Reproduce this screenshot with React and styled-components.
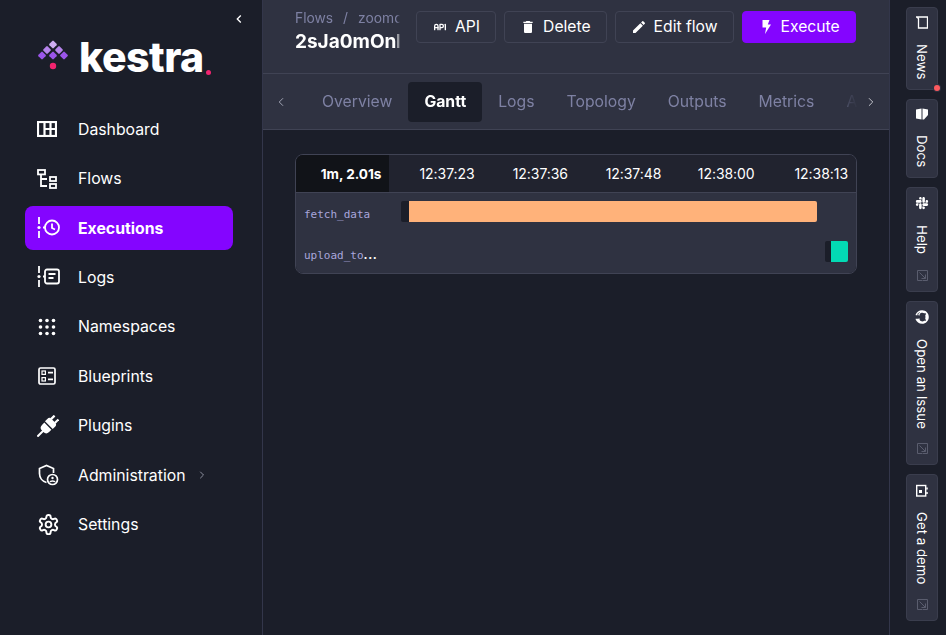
import React from "react";
import styled, { createGlobalStyle } from "styled-components";
import { FaSlack, FaGithub } from "react-icons/fa";
import { MdDelete, MdEdit, MdChevronLeft } from "react-icons/md";
import { TbApi } from "react-icons/tb";
import { ChevronLeft, ChevronRight } from "lucide-react";

const GlobalStyle = createGlobalStyle`
  html, body, #root {
    margin: 0;
    height: 100%;
  }

  body {
    background: #1b1e29;
    color: #fff;
    font-family: "Inter", "Liberation Sans", sans-serif;
    overflow: hidden;
  }

  * {
    box-sizing: border-box;
  }
`;

function LogoMark() {
  const dia = [
    [15, 4.5, "#cfaef2"],
    [9, 10, "#b684ec"],
    [21, 10, "#b684ec"],
    [4, 15.5, "#9b55ea"],
    [15, 15.5, "#9b55ea"],
    [26, 15.5, "#9b55ea"],
  ];
  return (
    <svg width="30" height="30" viewBox="0 0 30 30">
      {dia.map(([x, y, c]) => (
        <rect
          key={x + "-" + y}
          x={x - 3}
          y={y - 3}
          width="6"
          height="6"
          rx="1"
          fill={c}
          transform={`rotate(45 ${x} ${y})`}
        />
      ))}
      <circle cx="15" cy="26" r="3.2" fill="#f1246f" />
    </svg>
  );
}

function DashboardIcon() {
  return (
    <svg width="20" height="16" viewBox="0 0 20 16" fill="none" stroke="#fff" strokeWidth="2.2">
      <rect x="1" y="1" width="18" height="14" />
      <path d="M7.500 1v14M13.500 1v14M7.500 8h12" />
    </svg>
  );
}

function FlowsIcon() {
  return (
    <svg width="20" height="20" viewBox="0 0 20 20" fill="none" stroke="#fff" strokeWidth="1.8">
      <rect x="1" y="1" width="7" height="4.4" />
      <rect x="13" y="8" width="6" height="4" />
      <rect x="13" y="15" width="6" height="4" />
      <path d="M4 6v11h6M4 10h6" />
    </svg>
  );
}

function ExecutionsIcon() {
  return (
    <svg width="24" height="22" viewBox="0 0 24 22" fill="none" stroke="#fff" strokeWidth="1.8">
      <path d="M2 0v7M2 14v7" />
      <circle cx="2" cy="10.5" r="1.6" fill="#fff" stroke="none" />
      <path d="M6 10.5h2" />
      <circle cx="15" cy="10.5" r="7" />
      <path d="M15 6.5v4.5l3 1.5" />
    </svg>
  );
}

function LogsIcon() {
  return (
    <svg width="24" height="22" viewBox="0 0 24 22" fill="none" stroke="#fff" strokeWidth="1.8">
      <path d="M2 0v7M2 14v7" />
      <circle cx="2" cy="10.5" r="1.6" fill="#fff" stroke="none" />
      <path d="M6 10.5h2" />
      <rect x="8" y="3.5" width="14" height="14" rx="2" />
      <path d="M11.5 8h7M11.5 12h5" />
    </svg>
  );
}

function NamespacesIcon() {
  const dots = [];
  [1.5, 8, 14.5].forEach((y) =>
    [3.5, 10, 16.5].forEach((x) => dots.push([x, y + 1]))
  );
  return (
    <svg width="20" height="18" viewBox="0 0 20 18" fill="#fff">
      {dots.map(([x, y]) => (
        <circle key={x + "-" + y} cx={x} cy={y} r="1.8" />
      ))}
    </svg>
  );
}

function BlueprintsIcon() {
  return (
    <svg width="20" height="18" viewBox="0 0 20 18" fill="none" stroke="#fff" strokeWidth="1.7">
      <rect x="2" y="1" width="16" height="16" rx="1.5" />
      <rect x="5" y="4" width="3.4" height="3.4" strokeWidth="1.2" />
      <rect x="5" y="10.600" width="3.4" height="3.4" strokeWidth="1.2" />
      <path d="M11 5.700h5M11 12.300h5" />
    </svg>
  );
}

function PluginsIcon() {
  return (
    <svg width="22" height="22" viewBox="0 0 22 22" fill="#fff">
      <g transform="rotate(45 11 11)">
        <rect x="10" y="17" width="2" height="9" />
        <path d="M6 11.200h10v3.300a4 4 0 0 1-4 4h-2a4 4 0 0 1-4-4z" />
        <path d="M5.500 9.800V6.500a3 3 0 0 1 3-3h5a3 3 0 0 1 3 3v3.300z" />
        <rect x="7.200" y="-1" width="2.200" height="5" />
        <rect x="12.600" y="-1" width="2.200" height="5" />
      </g>
    </svg>
  );
}

function AdminIcon() {
  return (
    <svg width="22" height="22" viewBox="0 0 22 22" fill="none" stroke="#fff" strokeWidth="1.7">
      <path d="M9.500 18.500c-4-1-7-4.500-7-9V4.500l7-3 7 3V9" />
      <circle cx="15.500" cy="15.500" r="5" />
      <circle cx="15.500" cy="14" r="1.200" fill="#fff" stroke="none" />
      <path d="M13 18c.4-1.400 4.600-1.400 5 0" strokeWidth="1.4" />
    </svg>
  );
}

function SettingsIcon() {
  return (
    <svg width="23" height="23" viewBox="0 0 24 24" fill="none" stroke="#fff" strokeWidth="2" strokeLinejoin="round">
      <path d="M12.200 2h-.4a2 2 0 0 0-2 2v.2a2 2 0 0 1-1 1.700l-.4.300a2 2 0 0 1-2 0l-.2-.1a2 2 0 0 0-2.700.7l-.2.400a2 2 0 0 0 .7 2.700l.2.100a2 2 0 0 1 1 1.700v.5a2 2 0 0 1-1 1.800l-.2.100a2 2 0 0 0-.7 2.700l.2.400a2 2 0 0 0 2.700.7l.2-.1a2 2 0 0 1 2 0l.4.300a2 2 0 0 1 1 1.700v.2a2 2 0 0 0 2 2h.4a2 2 0 0 0 2-2v-.2a2 2 0 0 1 1-1.700l.4-.3a2 2 0 0 1 2 0l.2.100a2 2 0 0 0 2.700-.7l.2-.4a2 2 0 0 0-.7-2.700l-.2-.1a2 2 0 0 1-1-1.800v-.5a2 2 0 0 1 1-1.700l.2-.1a2 2 0 0 0 .7-2.700l-.2-.4a2 2 0 0 0-2.700-.7l-.2.100a2 2 0 0 1-2 0l-.4-.3a2 2 0 0 1-1-1.700V4a2 2 0 0 0-2-2z" />
      <circle cx="12" cy="12" r="3" />
    </svg>
  );
}

function BoltIcon() {
  return (
    <svg width="16" height="16" viewBox="0 0 16 16" fill="#fff">
      <path d="M4.500 1h7L9.800 5.500H13L7 15l1.200-6.500H4.500z" />
    </svg>
  );
}

function NewsIcon() {
  return (
    <svg width="12" height="13" viewBox="0 0 12 13" fill="none" stroke="#fff" strokeWidth="1.3">
      <path d="M.5 1h11v11H2.500V2.500z" />
    </svg>
  );
}

function DocsIcon() {
  return (
    <svg width="12" height="12" viewBox="0 0 12 12" fill="#fff">
      <path d="M0 1.500l5.500-1v11L0 10.500zM6.500.5l5.500 1V7l-4 4.500H6.500z" />
    </svg>
  );
}

function DemoIcon() {
  return (
    <svg width="12" height="13" viewBox="0 0 12 13" fill="none">
      <rect x=".7" y="1.500" width="9" height="10.500" stroke="#fff" strokeWidth="1.4" />
      <rect x="3" y="6" width="3" height="3" fill="#fff" />
      <path d="M11 3.500v2M11 8v2" stroke="#fff" strokeWidth="1.5" />
    </svg>
  );
}

function ExternalIcon() {
  return (
    <svg width="11" height="11" viewBox="0 0 11 11" fill="none" stroke="#5a5d6e" strokeWidth="1">
      <path d="M.5 5V.5h10v10H6" />
      <path d="M.5 5v5.500h5" />
      <path d="M2.500 2.500l6 6M8.500 4.500v4h-4" />
    </svg>
  );
}

const navItems = [
  { label: "Dashboard", icon: <DashboardIcon /> },
  { label: "Flows", icon: <FlowsIcon /> },
  { label: "Executions", icon: <ExecutionsIcon />, active: true },
  { label: "Logs", icon: <LogsIcon /> },
  { label: "Namespaces", icon: <NamespacesIcon /> },
  { label: "Blueprints", icon: <BlueprintsIcon /> },
  { label: "Plugins", icon: <PluginsIcon /> },
  { label: "Administration", icon: <AdminIcon />, more: true },
  { label: "Settings", icon: <SettingsIcon /> },
];

const tabs = ["Overview", "Gantt", "Logs", "Topology", "Outputs", "Metrics", "Audit logs"];
const ticks = ["1m, 2.01s", "12:37:23", "12:37:36", "12:37:48", "12:38:00", "12:38:13"];

const tasks = [
  { name: "fetch_data", start: 0, width: 93.06, wait: 8, color: "#ffb27a" },
  { name: "upload_to", cut: true, start: 94.85, width: 5.15, wait: 6, color: "#03dab4" },
];

const sideLinks = [
  { label: "News", h: 83, icon: <NewsIcon />, dot: true },
  { label: "Docs", h: 79, icon: <DocsIcon /> },
  { label: "Help", h: 105, icon: <FaSlack size={14} style={{ transform: "rotate(90deg)" }} />, ext: true },
  { label: "Open an Issue", h: 164, icon: <FaGithub size={14} style={{ transform: "rotate(90deg)" }} />, ext: true },
  { label: "Get a demo", h: 147, icon: <DemoIcon />, ext: true },
];

function App() {
  return (
    <>
      <GlobalStyle />
      <Page>
        <Sidebar>
          <Collapse>
            <MdChevronLeft size={16} />
          </Collapse>
          <LogoRow>
            <LogoMark />
            <LogoText>
              kestra<LogoDot />
            </LogoText>
          </LogoRow>
          <Nav>
            {navItems.map((item) => (
              <NavItem key={item.label} $active={item.active}>
                <NavIcon>{item.icon}</NavIcon>
                <span>{item.label}</span>
                {item.more && (
                  <NavMore>
                    <ChevronRight size={12} />
                  </NavMore>
                )}
              </NavItem>
            ))}
          </Nav>
        </Sidebar>

        <Main>
          <TopBar>
            <TitleBlock>
              <Crumbs>
                Flows<CrumbSep>/</CrumbSep>zoomcamp
              </Crumbs>
              <Title>2sJa0mOnlXYZ</Title>
            </TitleBlock>
            <Actions>
              <ActionBtn>
                <TbApi size={16} />
                API
              </ActionBtn>
              <ActionBtn>
                <MdDelete size={16} />
                Delete
              </ActionBtn>
              <ActionBtn>
                <MdEdit size={16} />
                Edit flow
              </ActionBtn>
              <ActionBtn $primary>
                <BoltIcon />
                Execute
              </ActionBtn>
            </Actions>
          </TopBar>

          <TabBar>
            <TabArrow $left>
              <ChevronLeft size={14} strokeWidth={1.5} />
            </TabArrow>
            <TabList>
              {tabs.map((tab) => (
                <Tab key={tab} $active={tab === "Gantt"}>
                  {tab}
                </Tab>
              ))}
            </TabList>
            <TabArrow>
              <ChevronRight size={14} strokeWidth={1.5} />
            </TabArrow>
          </TabBar>

          <Content>
            <Gantt>
              <GanttHead>
                {ticks.map((tick, i) => (
                  <Tick key={tick} $first={i === 0}>
                    {tick}
                  </Tick>
                ))}
              </GanttHead>
              <GanttBody>
                {tasks.map((task) => (
                  <GanttRow key={task.name}>
                    <TaskName>
                      <span>{task.name}</span>
                      {task.cut && <TaskCut>...</TaskCut>}
                    </TaskName>
                    <Track>
                      <Bar style={{ marginLeft: task.start + "%", width: task.width + "%" }}>
                        <BarWait style={{ width: task.wait }} />
                        <BarFill $color={task.color} />
                      </Bar>
                    </Track>
                  </GanttRow>
                ))}
              </GanttBody>
            </Gantt>
          </Content>
        </Main>

        <RightRail>
          {sideLinks.map((link) => (
            <RailBtn key={link.label} $h={link.h}>
              <RailIcon>{link.icon}</RailIcon>
              <RailLabel>{link.label}</RailLabel>
              {link.ext && (
                <RailExt>
                  <ExternalIcon />
                </RailExt>
              )}
              {link.dot && <RedDot />}
            </RailBtn>
          ))}
        </RightRail>
      </Page>
    </>
  );
}

const Page = styled.div`
  display: flex;
  height: 100vh;
  width: 100%;
`;

const Sidebar = styled.aside`
  position: relative;
  flex: 0 0 263px;
  border-right: 1px solid #33364a;
  background: #1b1e29;
  padding: 40px 29px 0 25px;
`;

const Collapse = styled.div`
  position: absolute;
  top: 11px;
  left: 231px;
  display: flex;
  color: #fff;
`;

const LogoRow = styled.div`
  display: flex;
  align-items: flex-start;
  gap: 11px;
  height: 40px;
  padding-left: 13px;
`;

const LogoText = styled.div`
  display: flex;
  align-items: flex-end;
  font-family: "Inter", sans-serif;
  font-weight: 800;
  font-size: 41px;
  line-height: 35px;
  letter-spacing: -0.5px;
  color: #fff;
`;

const LogoDot = styled.i`
  display: block;
  width: 5px;
  height: 5px;
  margin: 0 0 0 2px;
  border-radius: 50%;
  background: #f1246f;
`;

const Nav = styled.nav`
  display: flex;
  flex-direction: column;
  gap: 5.43px;
  margin-top: 27.2px;
`;

const NavItem = styled.a`
  display: flex;
  align-items: center;
  height: 44px;
  padding-left: 12px;
  border-radius: 8px;
  font-size: 15.8px;
  color: #fff;
  font-weight: ${(p) => (p.$active ? 700 : 400)};
  background: ${(p) => (p.$active ? "#8405ff" : "transparent")};
`;

const NavIcon = styled.span`
  display: flex;
  align-items: center;
  width: 41px;
  flex: none;
`;

const NavMore = styled.span`
  display: flex;
  margin-left: 10px;
  color: #8c8f9e;
`;

const Main = styled.main`
  flex: 1;
  min-width: 0;
  display: flex;
  flex-direction: column;
`;

const TopBar = styled.header`
  display: flex;
  align-items: flex-start;
  height: 74px;
  padding: 11px 32px 0;
  background: #2f3241;
  border-bottom: 1px solid #404354;
`;

const TitleBlock = styled.div`
  flex: 0 0 105px;
  overflow: hidden;
  white-space: nowrap;
  mask-image: linear-gradient(to left, transparent, #000 3px);
`;

const Crumbs = styled.div`
  font-size: 13.8px;
  line-height: 15px;
  color: #7e81a3;
`;

const CrumbSep = styled.span`
  margin: 0 10px;
`;

const Title = styled.div`
  margin-top: 5px;
  font-size: 19px;
  line-height: 22px;
  font-weight: 700;
  color: #fff;
`;

const Actions = styled.div`
  display: flex;
  gap: 8px;
  margin-left: 16px;
`;

const ActionBtn = styled.button`
  display: flex;
  align-items: center;
  gap: 7px;
  height: 32px;
  padding: 0 15px 1px;
  border-radius: 4px;
  border: 1px solid ${(p) => (p.$primary ? "#8405ff" : "#404354")};
  background: ${(p) => (p.$primary ? "#8405ff" : "transparent")};
  color: #fff;
  font-family: inherit;
  font-size: 15.7px;
  white-space: nowrap;
`;

const TabBar = styled.div`
  display: flex;
  align-items: center;
  height: 56px;
  background: #2f3241;
  border-bottom: 1px solid #404354;
`;

const TabArrow = styled.div`
  display: flex;
  align-items: center;
  flex: ${(p) => (p.$left ? "0 0 43px" : "1")};
  padding-left: ${(p) => (p.$left ? "11px" : "6px")};
  color: ${(p) => (p.$left ? "#b0b2c2" : "#d6d7de")};
`;

const TabList = styled.div`
  display: flex;
  flex: 0 0 552px;
  overflow: hidden;
  mask-image: linear-gradient(to left, transparent, rgba(0, 0, 0, 0.3) 10px, #000 14px);
`;

const Tab = styled.div`
  flex: none;
  height: 40px;
  padding: 0 16px;
  display: flex;
  align-items: center;
  border-radius: 4px;
  font-size: 15.75px;
  font-weight: ${(p) => (p.$active ? 700 : 400)};
  color: ${(p) => (p.$active ? "#fff" : "#7e81a3")};
  background: ${(p) => (p.$active ? "#1b1e29" : "transparent")};
`;

const Content = styled.div`
  flex: 1;
  padding: 24px 32px;
`;

const Gantt = styled.section`
  border: 1px solid #404354;
  border-radius: 8px;
  overflow: hidden;
`;

const GanttHead = styled.div`
  display: grid;
  grid-template-columns: repeat(6, 1fr);
  height: 38px;
  background: #21232f;
  border-bottom: 1px solid #404354;
`;

const Tick = styled.div`
  display: flex;
  align-items: center;
  justify-content: flex-end;
  padding-right: 8px;
  font-size: ${(p) => (p.$first ? "13.6px" : "14px")};
  letter-spacing: -0.05px;
  color: #fff;
  font-weight: ${(p) => (p.$first ? 700 : 400)};
  background: ${(p) => (p.$first ? "#111318" : "transparent")};
`;

const GanttBody = styled.div`
  display: flex;
  flex-direction: column;
  gap: 19px;
  padding: 8px 8px 11px;
  background: #2f3241;
`;

const GanttRow = styled.div`
  display: flex;
  align-items: center;
  height: 21px;
`;

const TaskName = styled.div`
  flex: 0 0 97px;
  padding-top: 6px;
  font-family: "DejaVu Sans Mono", monospace;
  font-size: 11px;

  span {
    color: #a9a6dc;
  }
`;

const TaskCut = styled.b`
  font-family: "Inter", sans-serif;
  font-size: 12px;
  letter-spacing: 0.6px;
  color: #fff;
`;

const Track = styled.div`
  flex: 1;
  height: 100%;
`;

const Bar = styled.div`
  display: flex;
  height: 100%;
  border-radius: 2px;
  overflow: hidden;
`;

const BarWait = styled.div`
  flex: none;
  background: #1b1e29;
`;

const BarFill = styled.div`
  flex: 1;
  background: ${(p) => p.$color};
`;

const RightRail = styled.aside`
  flex: 0 0 57px;
  display: flex;
  flex-direction: column;
  gap: 9px;
  padding: 7px 8px 0 16px;
  background: #1b1e29;
  border-left: 1px solid #33364a;
`;

const RailBtn = styled.a`
  position: relative;
  display: flex;
  flex-direction: column;
  align-items: center;
  gap: 14px;
  width: 32px;
  height: ${(p) => p.$h}px;
  padding: 7px 0 10px;
  border: 1px solid #3a3d4d;
  border-radius: 4px;
  background: #2f3241;
`;

const RailIcon = styled.span`
  display: flex;
  align-items: center;
  justify-content: center;
  height: 16px;
  color: #fff;
`;

const RailLabel = styled.span`
  writing-mode: vertical-rl;
  font-size: 13.3px;
  line-height: 16px;
  color: #fff;
`;

const RailExt = styled.span`
  display: flex;
  margin-top: auto;
`;

const RedDot = styled.i`
  position: absolute;
  right: -3px;
  bottom: -2px;
  width: 6px;
  height: 6px;
  border-radius: 50%;
  background: #fd5a5f;
  box-shadow: 0 0 0 1px #2f3241;
`;

export default App;
